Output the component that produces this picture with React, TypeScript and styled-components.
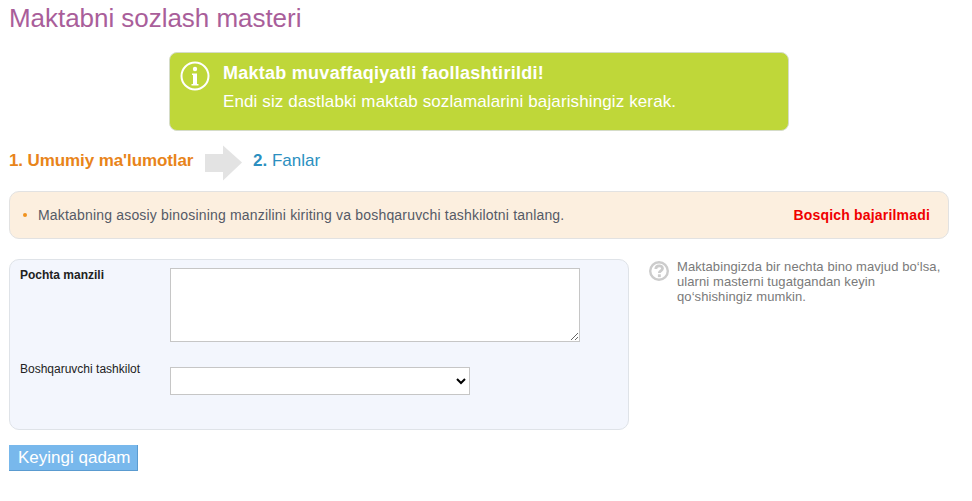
import React from "react";
import styled, { createGlobalStyle } from "styled-components";

const Global = createGlobalStyle`
  html, body { margin: 0; padding: 0; background: #fff; }
  body { font-family: "Liberation Sans", Arial, sans-serif; }
`;
const Page = styled.div`
  width: 940px; margin-left: 9px; padding-top: 3px; display: flex; flex-direction: column;
`;
const Title = styled.h1`
  margin: 0; font-size: 26px; line-height: 30px; font-weight: 400; color: #a95e9a; letter-spacing: -0.04px;
`;
const Banner = styled.div`
  align-self: center; box-sizing: border-box; width: 620px; height: 79px; margin-top: 19px;
  background: #bfd739; border: 1px solid #d5dcc8; border-radius: 8px; position: relative; padding: 10px 0 0 53px; color: #fff;
`;
const BannerIcon = styled.svg`
  position: absolute; left: 10px; top: 8px; width: 30px; height: 30px;
`;
const BannerTitle = styled.div`
  font-size: 18px; font-weight: 700; line-height: 20px; letter-spacing: 0.26px;
`;
const BannerText = styled.div`
  font-size: 17px; line-height: 20px; margin-top: 9px; letter-spacing: 0.12px;
`;
const Steps = styled.div`
  display: flex; align-items: center; height: 36px; margin: 12px 0 2px; font-size: 17px;
`;
const StepOne = styled.span`
  font-weight: 700; color: #e8841a; width: 196px; letter-spacing: -0.1px;
`;
const Arrow = styled.svg`
  width: 37px; height: 37px; margin: 2px 11px 0 0; flex: none;
`;
const StepTwo = styled.span`
  color: #2b8fc0;
  b { font-weight: 700; }
`;
const Notice = styled.div`
  box-sizing: border-box; height: 48px; margin-top: 10px; background: #fcefdf; border: 1px solid #e2e2e2; border-radius: 10px;
  display: flex; align-items: center; justify-content: space-between; padding: 0 18px 0 13px; font-size: 14px; color: #555a66;
`;
const NoticeText = styled.div`
  display: flex; align-items: center; gap: 11px; letter-spacing: 0.18px;
`;
const Dot = styled.span`
  width: 4px; height: 4px; border-radius: 50%; background: #f0921e;
`;
const Failed = styled.span`
  color: #f00000; font-weight: 700; letter-spacing: 0.18px;
`;
const Columns = styled.div`
  display: flex; margin-top: 20px;
`;
const FormPanel = styled.div`
  box-sizing: border-box; width: 620px; height: 171px; background: #f3f6fd; border: 1px solid #dfe3e8; border-radius: 10px;
  padding: 8px 10px; display: grid; grid-template-columns: 150px 1fr; grid-template-rows: 74px auto; row-gap: 20px;
`;
const Label = styled.label<{ $bold?: boolean }>`
  font-size: 12px; line-height: 14px; color: #222; font-weight: ${(p) => (p.$bold ? 700 : 400)};
`;
const Area = styled.textarea`
  box-sizing: border-box; width: 410px; height: 74px; margin: 0; border: 1px solid #c6c6c6; background: #fff; display: block;
`;
const Select = styled.select`
  box-sizing: border-box; width: 300px; height: 28px; margin: 5px 0 0; border: 1px solid #c6c6c6; background: #fff; display: block;
`;
const Hint = styled.div`
  display: flex; margin-left: 20px; gap: 8px; color: #7a7a7a; font-size: 13px; line-height: 15px; letter-spacing: 0.09px;
`;
const HintIcon = styled.svg`
  width: 20px; height: 20px; flex: none; margin-top: 2px;
`;
const HintText = styled.div`
  width: 272px;
`;
const Next = styled.button`
  align-self: flex-start; box-sizing: border-box; width: 129px; height: 26px; margin-top: 15px; padding: 0 0 0 9px; text-align: left;
  background: #78b8ec; border: none; border-bottom: 1px solid #5a9bd0; border-right: 1px solid #5a9bd0; color: #fff;
  font-family: inherit; font-size: 17px; line-height: 24px;
`;

export default function App() {
  return (
    <>
      <Global />
      <Page>
        <Title>Maktabni sozlash masteri</Title>
        <Banner>
          <BannerIcon viewBox="0 0 30 30" fill="none">
            <circle cx="15" cy="15" r="13.500" stroke="#fff" strokeWidth="2" />
            <circle cx="15" cy="8" r="2.200" fill="#fff" />
            <path d="M12 12.500h5v10.500h1.500v1.500h-7v-1.500h1.500v-9h-1z" fill="#fff" />
          </BannerIcon>
          <BannerTitle>Maktab muvaffaqiyatli faollashtirildi!</BannerTitle>
          <BannerText>Endi siz dastlabki maktab sozlamalarini bajarishingiz kerak.</BannerText>
        </Banner>
        <Steps>
          <StepOne>1. Umumiy ma'lumotlar</StepOne>
          <Arrow viewBox="0 0 37 37">
            <path d="M0 10h18V1.500l19 17-19 18V28H0z" fill="#e3e3e3" />
          </Arrow>
          <StepTwo><b>2.</b> Fanlar</StepTwo>
        </Steps>
        <Notice>
          <NoticeText><Dot />Maktabning asosiy binosining manzilini kiriting va boshqaruvchi tashkilotni tanlang.</NoticeText>
          <Failed>Bosqich bajarilmadi</Failed>
        </Notice>
        <Columns>
          <FormPanel>
            <Label $bold>Pochta manzili</Label>
            <Area />
            <Label>Boshqaruvchi tashkilot</Label>
            <Select><option></option></Select>
          </FormPanel>
          <Hint>
            <HintIcon viewBox="0 0 20 20" fill="none">
              <circle cx="10" cy="10" r="8.800" stroke="#cccccc" strokeWidth="2.400" />
              <path d="M6.800 8c0-4.200 6.700-4.200 6.700-.5 0 2.300-3.200 2.300-3.200 4.500" stroke="#cccccc" strokeWidth="2.800" />
              <rect x="8.900" y="13.300" width="2.900" height="2.800" fill="#cccccc" />
            </HintIcon>
            <HintText>Maktabingizda bir nechta bino mavjud bo‘lsa, ularni masterni tugatgandan keyin qo‘shishingiz mumkin.</HintText>
          </Hint>
        </Columns>
        <Next>Keyingi qadam</Next>
      </Page>
    </>
  );
}
